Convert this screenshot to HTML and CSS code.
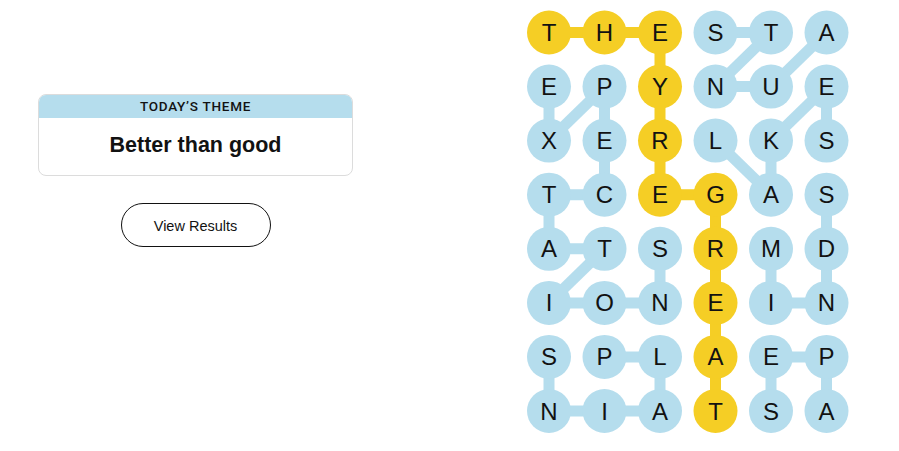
FILE: index.html
```html
<!DOCTYPE html>
<html>
<head>
<meta charset="utf-8">
<link rel="stylesheet" href="styles.css">
</head>
<body>
<div class="page">
  <section class="side">
    <div class="theme-card">
      <div class="theme-head">TODAY’S THEME</div>
      <div class="theme-body">Better than good</div>
    </div>
    <button class="results-btn">View Results</button>
  </section>
  <section class="board">
    <svg class="board-svg" width="322" height="451" viewBox="0 0 322 451">
      <g class="links-blue">
        <line x1="188.5" y1="32.5" x2="244" y2="32.5"/>
        <line x1="244" y1="32.5" x2="188.5" y2="86.6"/>
        <line x1="299.5" y1="32.5" x2="244" y2="86.6"/>
        <line x1="188.5" y1="86.6" x2="244" y2="86.6"/>
        <line x1="22" y1="86.6" x2="22" y2="140.6"/>
        <line x1="77.5" y1="86.6" x2="22" y2="140.6"/>
        <line x1="77.5" y1="86.6" x2="77.5" y2="140.6"/>
        <line x1="299.5" y1="86.6" x2="244" y2="140.6"/>
        <line x1="299.5" y1="86.6" x2="299.5" y2="140.6"/>
        <line x1="77.5" y1="140.6" x2="77.5" y2="194.7"/>
        <line x1="22" y1="194.7" x2="77.5" y2="194.7"/>
        <line x1="188.5" y1="140.6" x2="244" y2="194.7"/>
        <line x1="244" y1="140.6" x2="244" y2="194.7"/>
        <line x1="22" y1="194.7" x2="22" y2="248.8"/>
        <line x1="299.5" y1="194.7" x2="299.5" y2="248.8"/>
        <line x1="22" y1="248.8" x2="77.5" y2="248.8"/>
        <line x1="77.5" y1="248.8" x2="22" y2="302.9"/>
        <line x1="133" y1="248.8" x2="133" y2="302.9"/>
        <line x1="244" y1="248.8" x2="244" y2="302.9"/>
        <line x1="299.5" y1="248.8" x2="299.5" y2="302.9"/>
        <line x1="22" y1="302.9" x2="133" y2="302.9"/>
        <line x1="244" y1="302.9" x2="299.5" y2="302.9"/>
        <line x1="22" y1="356.9" x2="22" y2="411"/>
        <line x1="77.5" y1="356.9" x2="133" y2="356.9"/>
        <line x1="133" y1="356.9" x2="133" y2="411"/>
        <line x1="244" y1="356.9" x2="299.5" y2="356.9"/>
        <line x1="244" y1="356.9" x2="244" y2="411"/>
        <line x1="299.5" y1="356.9" x2="299.5" y2="411"/>
        <line x1="22" y1="411" x2="133" y2="411"/>
      </g>
      <g class="links-gold">
        <polyline points="22,32.5 133,32.5 133,194.7 188.5,194.7 188.5,411"/>
      </g>
      <g class="dots-blue">
        <circle cx="188.5" cy="32.5" r="22"/><circle cx="244" cy="32.5" r="22"/><circle cx="299.5" cy="32.5" r="22"/>
        <circle cx="22" cy="86.6" r="22"/><circle cx="77.5" cy="86.6" r="22"/><circle cx="188.5" cy="86.6" r="22"/><circle cx="244" cy="86.6" r="22"/><circle cx="299.5" cy="86.6" r="22"/>
        <circle cx="22" cy="140.6" r="22"/><circle cx="77.5" cy="140.6" r="22"/><circle cx="188.5" cy="140.6" r="22"/><circle cx="244" cy="140.6" r="22"/><circle cx="299.5" cy="140.6" r="22"/>
        <circle cx="22" cy="194.7" r="22"/><circle cx="77.5" cy="194.7" r="22"/><circle cx="244" cy="194.7" r="22"/><circle cx="299.5" cy="194.7" r="22"/>
        <circle cx="22" cy="248.8" r="22"/><circle cx="77.5" cy="248.8" r="22"/><circle cx="133" cy="248.8" r="22"/><circle cx="244" cy="248.8" r="22"/><circle cx="299.5" cy="248.8" r="22"/>
        <circle cx="22" cy="302.9" r="22"/><circle cx="77.5" cy="302.9" r="22"/><circle cx="133" cy="302.9" r="22"/><circle cx="244" cy="302.9" r="22"/><circle cx="299.5" cy="302.9" r="22"/>
        <circle cx="22" cy="356.9" r="22"/><circle cx="77.5" cy="356.9" r="22"/><circle cx="133" cy="356.9" r="22"/><circle cx="244" cy="356.9" r="22"/><circle cx="299.5" cy="356.9" r="22"/>
        <circle cx="22" cy="411" r="22"/><circle cx="77.5" cy="411" r="22"/><circle cx="133" cy="411" r="22"/><circle cx="244" cy="411" r="22"/><circle cx="299.5" cy="411" r="22"/>
      </g>
      <g class="dots-gold">
        <circle cx="22" cy="32.5" r="22"/><circle cx="77.5" cy="32.5" r="22"/><circle cx="133" cy="32.5" r="22"/>
        <circle cx="133" cy="86.6" r="22"/><circle cx="133" cy="140.6" r="22"/><circle cx="133" cy="194.7" r="22"/>
        <circle cx="188.5" cy="194.7" r="22"/><circle cx="188.5" cy="248.8" r="22"/><circle cx="188.5" cy="302.9" r="22"/>
        <circle cx="188.5" cy="356.9" r="22"/><circle cx="188.5" cy="411" r="22"/>
      </g>
      <g class="letters">
        <text x="22" y="32.5">T</text><text x="77.5" y="32.5">H</text><text x="133" y="32.5">E</text><text x="188.5" y="32.5">S</text><text x="244" y="32.5">T</text><text x="299.5" y="32.5">A</text>
        <text x="22" y="86.6">E</text><text x="77.5" y="86.6">P</text><text x="133" y="86.6">Y</text><text x="188.5" y="86.6">N</text><text x="244" y="86.6">U</text><text x="299.5" y="86.6">E</text>
        <text x="22" y="140.6">X</text><text x="77.5" y="140.6">E</text><text x="133" y="140.6">R</text><text x="188.5" y="140.6">L</text><text x="244" y="140.6">K</text><text x="299.5" y="140.6">S</text>
        <text x="22" y="194.7">T</text><text x="77.5" y="194.7">C</text><text x="133" y="194.7">E</text><text x="188.5" y="194.7">G</text><text x="244" y="194.7">A</text><text x="299.5" y="194.7">S</text>
        <text x="22" y="248.8">A</text><text x="77.5" y="248.8">T</text><text x="133" y="248.8">S</text><text x="188.5" y="248.8">R</text><text x="244" y="248.8">M</text><text x="299.5" y="248.8">D</text>
        <text x="22" y="302.9">I</text><text x="77.5" y="302.9">O</text><text x="133" y="302.9">N</text><text x="188.5" y="302.9">E</text><text x="244" y="302.9">I</text><text x="299.5" y="302.9">N</text>
        <text x="22" y="356.9">S</text><text x="77.5" y="356.9">P</text><text x="133" y="356.9">L</text><text x="188.5" y="356.9">A</text><text x="244" y="356.9">E</text><text x="299.5" y="356.9">P</text>
        <text x="22" y="411">N</text><text x="77.5" y="411">I</text><text x="133" y="411">A</text><text x="188.5" y="411">T</text><text x="244" y="411">S</text><text x="299.5" y="411">A</text>
      </g>
    </svg>
  </section>
</div>
</body>
</html>
```
FILE: styles.css
```css
html, body {
  margin: 0;
  padding: 0;
  background: #ffffff;
}
body {
  font-family: "Liberation Sans", Arial, sans-serif;
  color: #121212;
}
.page {
  display: flex;
  align-items: flex-start;
  width: 899px;
  height: 451px;
  overflow: hidden;
}
.side {
  display: flex;
  flex-direction: column;
  align-items: center;
  width: 315px;
  margin-left: 38px;
  margin-top: 94px;
}
.theme-card {
  width: 315px;
  box-sizing: border-box;
  border: 1px solid #dcdcdc;
  border-radius: 8px;
  overflow: hidden;
}
.theme-head {
  background: #b5dded;
  height: 24px;
  line-height: 24px;
  text-align: center;
  font-family: Roboto, "Liberation Sans", sans-serif;
  font-size: 13.5px;
  font-weight: 500;
  letter-spacing: 0.75px;
  color: #121212;
  margin: -1px -1px 0;
}
.theme-body {
  height: 57px;
  line-height: 55px;
  text-align: center;
  font-size: 21.5px;
  font-weight: 700;
  color: #121212;
}
.results-btn {
  margin-top: 27px;
  width: 150px;
  height: 44px;
  border: 1px solid #121212;
  border-radius: 22px;
  background: #fff;
  font-family: "Liberation Sans", Arial, sans-serif;
  font-size: 14.5px;
  line-height: 44px;
  color: #121212;
  padding: 0;
}
.board {
  margin-left: 174px;
}
.board-svg {
  display: block;
}
.links-blue line {
  stroke: #b5dded;
  stroke-width: 11;
}
.links-gold polyline {
  stroke: #f5ce25;
  stroke-width: 11;
  fill: none;
}
.dots-blue circle {
  fill: #b5dded;
}
.dots-gold circle {
  fill: #f5ce25;
}
.letters text {
  font-family: "Liberation Sans", Arial, sans-serif;
  font-size: 24px;
  fill: #121212;
  text-anchor: middle;
  dominant-baseline: central;
}
```
